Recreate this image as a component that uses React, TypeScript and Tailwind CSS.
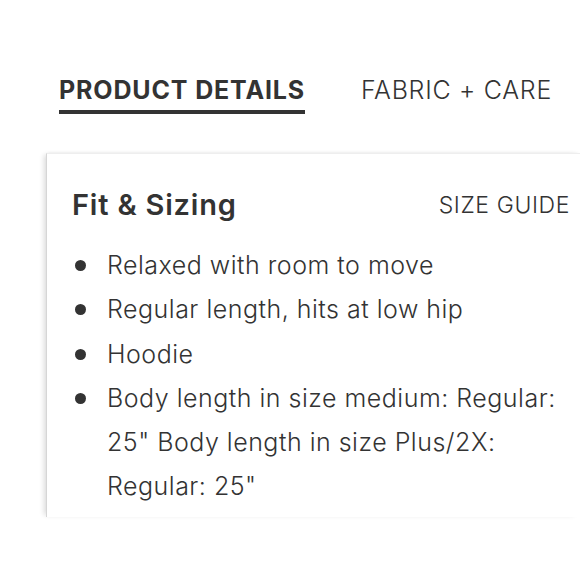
import React from "react";

const bullets = [
  "Relaxed with room to move",
  "Regular length, hits at low hip",
  "Hoodie",
  'Body length in size medium: Regular: 25" Body length in size Plus/2X: Regular: 25"',
];

export default function App() {
  return (
    <div
      className="h-[580px] w-[580px] overflow-hidden bg-white text-[#333333]"
      style={{ fontFamily: "Inter, Lato, sans-serif" }}
    >
      <div className="flex items-start gap-[56px] pl-[59px] pt-[75px]">
        <div className="flex flex-col">
          <span className="text-[25px] font-bold leading-[30px] tracking-[0.85px]">PRODUCT DETAILS</span>
          <div className="mt-[5px] h-[4px] w-full bg-[#333333]" />
        </div>
        <span className="text-[25px] font-light leading-[30px] tracking-[0.7px]">FABRIC + CARE</span>
      </div>

      <div className="ml-[46px] mt-[39px] h-[364px] border-l border-t border-l-[#d6d6d6] border-t-[#eeeeee] pl-[25px] pr-[10px] shadow-[-4px_0_5px_-2px_rgba(0,0,0,0.14),0_-2px_3px_-2px_rgba(0,0,0,0.08)]">
        <div className="flex items-center justify-between pt-[34px]">
          <h2 className="text-[29px] font-semibold leading-[34px] tracking-[0.8px]">Fit &amp; Sizing</h2>
          <span className="text-[23px] font-light leading-[34px] tracking-[0.6px]">SIZE GUIDE</span>
        </div>
        <ul className="mt-[21px] flex flex-col">
          {bullets.map((b) => (
            <li key={b} className="flex items-start text-[25px] font-light leading-[44.3px] tracking-[0.5px]">
              <span className="mt-[17px] mr-[21px] ml-[3px] h-[11px] w-[11px] shrink-0 rounded-full bg-[#333333]" />
              <span className="max-w-[462px]">{b}</span>
            </li>
          ))}
        </ul>
      </div>
    </div>
  );
}
